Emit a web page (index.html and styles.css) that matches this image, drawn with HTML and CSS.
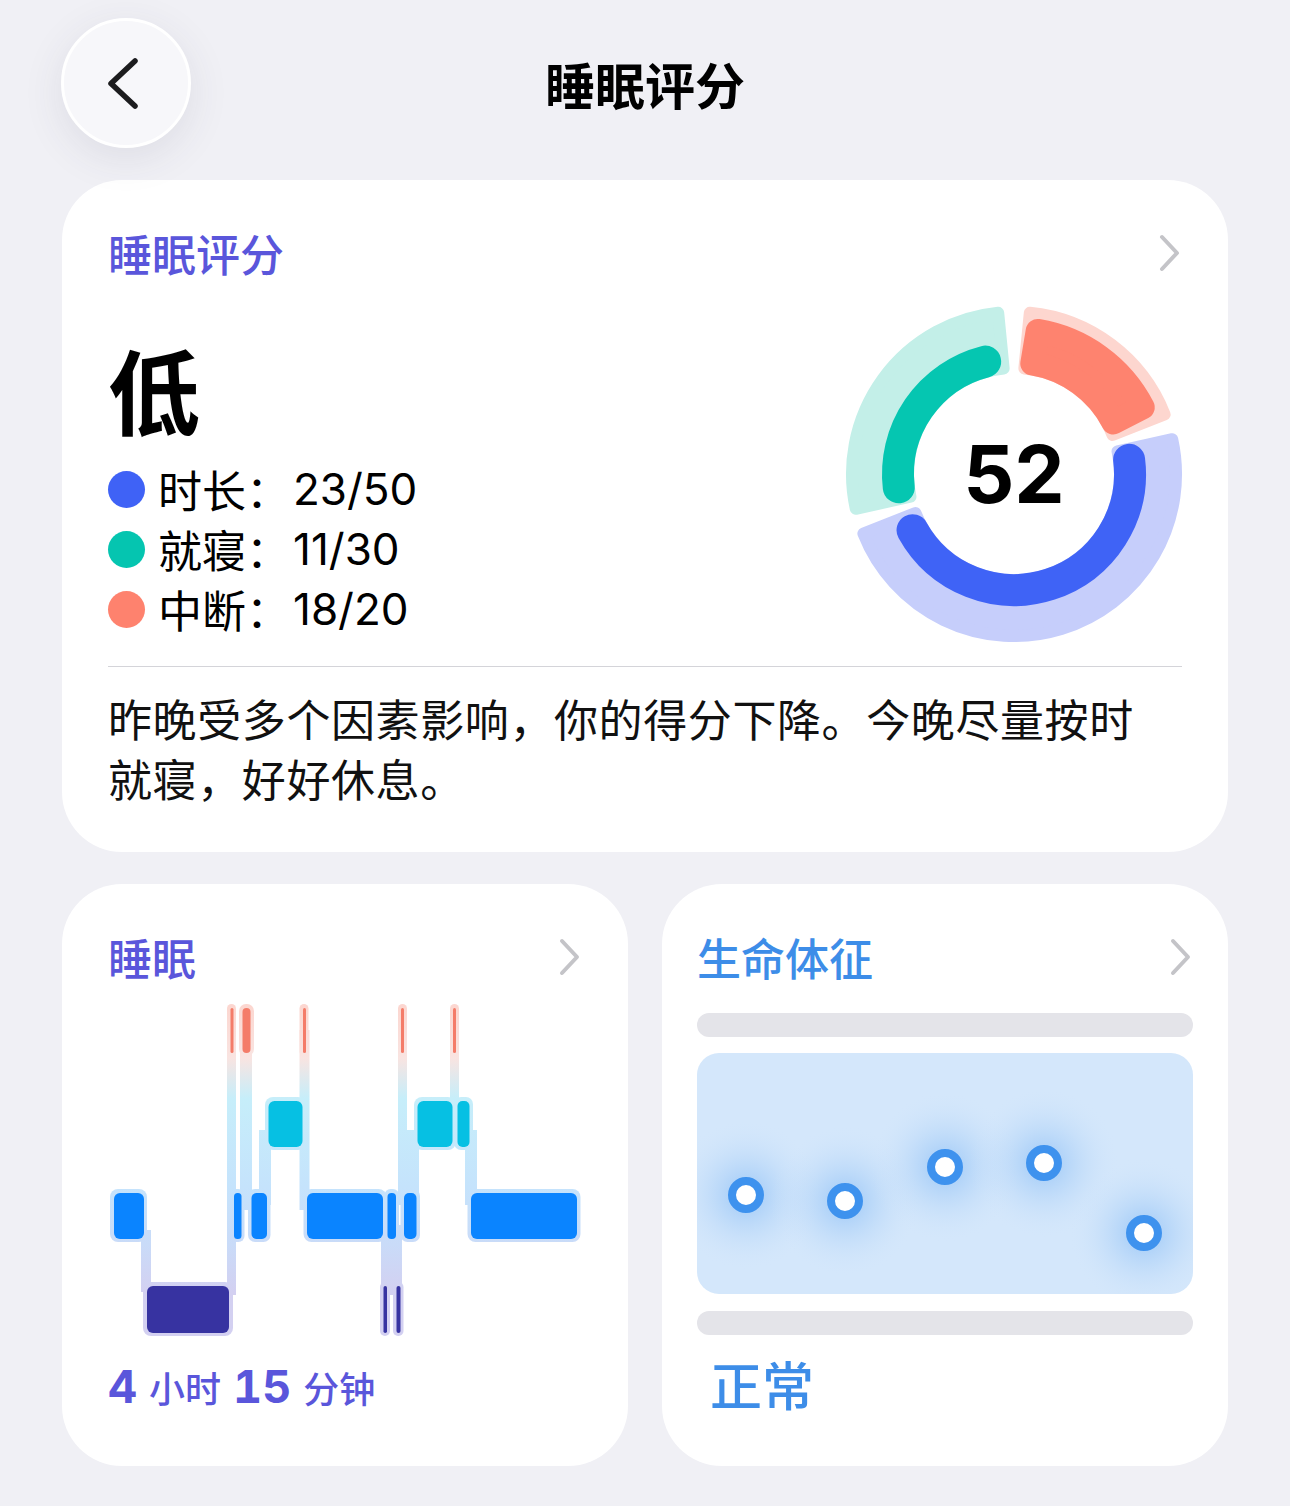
FILE: index.html
```html
<!DOCTYPE html>
<html lang="zh-CN">
<head>
  <meta charset="UTF-8" />
  <meta name="viewport" content="width=device-width, initial-scale=1.0"/>
  <title>睡眠评分</title>
  <link rel="stylesheet" href="styles.css">
</head>
<body>

  <header class="top-bar">
    <div class="back-btn">
      <svg width="40" height="60" viewBox="0 0 40 60">
        <path d="M29 8 L5 30.5 L29 53" fill="none" stroke="#1c1c1e" stroke-width="5.5" stroke-linecap="round" stroke-linejoin="round"/>
      </svg>
    </div>
    <h1 class="page-title">睡眠评分</h1>
    <div></div>
  </header>

  <main class="content">

    <section class="card score-card">
      <div class="card-head">
        <h2 class="card-title indigo">睡眠评分</h2>
        <svg class="chevron" width="24" height="40" viewBox="0 0 24 40"><path d="M4 4 L19 20 L4 36"/></svg>
      </div>

      <div class="summary">
        <div class="summary-left">
          <div class="grade">低</div>
          <ul class="legend">
            <li><span class="dot dot-blue"></span>时长：<span class="num">23/50</span></li>
            <li><span class="dot dot-teal"></span>就寝：<span class="num">11/30</span></li>
            <li><span class="dot dot-coral"></span>中断：<span class="num">18/20</span></li>
          </ul>
        </div>

        <svg class="ring" width="340" height="340" viewBox="-170 -170 340 340">
          <g stroke-width="12" stroke-linejoin="round">
            <path fill="#fdd6cf" stroke="#fdd6cf" d="M15.81 -161.22 A162 162 0 0 1 150.63 -59.63 L98.56 -39.02 A106 106 0 0 0 10.35 -105.49 Z"/>
            <path fill="#c6cefb" stroke="#c6cefb" d="M158.23 -34.78 A162 162 0 0 1 -150.63 59.63 L-98.56 39.02 A106 106 0 0 0 103.53 -22.76 Z"/>
            <path fill="#c3efe8" stroke="#c3efe8" d="M-158.23 34.78 A162 162 0 0 1 -15.81 -161.22 L-10.35 -105.49 A106 106 0 0 0 -103.53 22.76 Z"/>
          </g>
          <path fill="#fe836f" stroke="#fe836f" stroke-width="24" stroke-linejoin="round" d="M23.68 -143.06 A145 145 0 0 1 128.73 -66.73 L99.43 -51.54 A112 112 0 0 0 18.29 -110.50 Z"/>
          <path fill="none" stroke="#3f63f6" stroke-width="32" stroke-linecap="round" d="M115.13 -14.14 A116 116 0 0 1 -101.45 56.24"/>
          <path fill="none" stroke="#05c6b1" stroke-width="32" stroke-linecap="round" d="M-115.23 13.33 A116 116 0 0 1 -28.85 -112.36"/>
          <text class="score" x="0" y="29" text-anchor="middle">52</text>
        </svg>
      </div>

      <hr class="divider">

      <p class="advice">昨晚受多个因素影响，你的得分下降。今晚尽量按时<br>就寝，好好休息。</p>
    </section>

    <div class="card-row">

      <section class="card small-card sleep-card">
        <div class="card-head">
          <h2 class="card-title indigo">睡眠</h2>
          <svg class="chevron" width="24" height="40" viewBox="0 0 24 40"><path d="M4 4 L19 20 L4 36"/></svg>
        </div>

        <svg class="stages" width="474" height="340" viewBox="3 0 474 340">
          <defs>
            <linearGradient id="halo" gradientUnits="userSpaceOnUse" x1="0" y1="0" x2="0" y2="340">
              <stop offset="0" stop-color="#fcd5ce"/>
              <stop offset="0.17" stop-color="#f9e4e1"/>
              <stop offset="0.29" stop-color="#c6eefa"/>
              <stop offset="0.55" stop-color="#c5e3fc"/>
              <stop offset="0.72" stop-color="#c9dbf8"/>
              <stop offset="0.86" stop-color="#d3d0f1"/>
              <stop offset="1" stop-color="#d3d0f1"/>
            </linearGradient>
          </defs>

          <!-- halo -->
          <g fill="url(#halo)">
            <rect x="5" y="189" width="37" height="53" rx="8"/>
            <rect x="38" y="282" width="90" height="54" rx="8"/>
            <rect x="122" y="4" width="9" height="52" rx="4.5"/>
            <rect x="125.5" y="189" width="14" height="53" rx="6"/>
            <rect x="134" y="4" width="15" height="52" rx="7"/>
            <rect x="143" y="189" width="22.5" height="53" rx="7"/>
            <rect x="160" y="97" width="41" height="53" rx="8"/>
            <rect x="194.5" y="4" width="9" height="52" rx="4.5"/>
            <rect x="198.5" y="189" width="83" height="53" rx="8"/>
            <rect x="275" y="282" width="10" height="54" rx="5"/>
            <rect x="279.5" y="189" width="14.5" height="53" rx="6"/>
            <rect x="288" y="282" width="10.5" height="54" rx="5"/>
            <rect x="293" y="4" width="9" height="52" rx="4.5"/>
            <rect x="295.5" y="189" width="19.5" height="53" rx="7"/>
            <rect x="309" y="97" width="42" height="53" rx="8"/>
            <rect x="345" y="4" width="9" height="52" rx="4.5"/>
            <rect x="349" y="97" width="19" height="53" rx="7"/>
            <rect x="362.5" y="189" width="113" height="53" rx="8"/>

            <rect x="36" y="230" width="10" height="62"/>
            <rect x="122" y="30" width="9" height="265"/>
            <rect x="135" y="30" width="12" height="180"/>
            <rect x="154" y="130" width="12" height="75"/>
            <rect x="194.5" y="30" width="10" height="180"/>
            <rect x="276" y="225" width="21" height="70"/>
            <rect x="293" y="30" width="9" height="175"/>
            <rect x="300" y="130" width="14" height="75"/>
            <rect x="345" y="30" width="9" height="85"/>
            <rect x="360" y="130" width="12" height="75"/>
          </g>

          <!-- awake -->
          <g fill="#f47c69">
            <rect x="125.5" y="8" width="3" height="45" rx="1.5"/>
            <rect x="137.5" y="8" width="8" height="45" rx="4"/>
            <rect x="198" y="8" width="3" height="45" rx="1.5"/>
            <rect x="296" y="8" width="3" height="45" rx="1.5"/>
            <rect x="348" y="8" width="3" height="45" rx="1.5"/>
          </g>
          <!-- rem -->
          <g fill="#06c0e3">
            <rect x="163.5" y="101" width="34" height="46" rx="6"/>
            <rect x="312.5" y="101" width="35" height="46" rx="6"/>
            <rect x="352.5" y="101" width="12" height="46" rx="5"/>
          </g>
          <!-- light -->
          <g fill="#0a84ff">
            <rect x="9" y="193" width="30" height="46" rx="6"/>
            <rect x="129" y="193" width="7.5" height="46" rx="3.5"/>
            <rect x="146.5" y="193" width="15.5" height="46" rx="5"/>
            <rect x="202" y="193" width="76" height="46" rx="6"/>
            <rect x="282.5" y="193" width="8.5" height="46" rx="4"/>
            <rect x="299" y="193" width="12.5" height="46" rx="5"/>
            <rect x="366" y="193" width="106" height="46" rx="6"/>
          </g>
          <!-- deep -->
          <g fill="#3733a1">
            <rect x="42" y="286" width="82" height="47" rx="6"/>
            <rect x="278.5" y="286" width="3.5" height="47" rx="1.75"/>
            <rect x="291.5" y="286" width="4" height="47" rx="2"/>
          </g>
        </svg>

        <div class="duration">
          <span class="big">4</span><span class="unit">小时</span><span class="big">15</span><span class="unit">分钟</span>
        </div>
      </section>

      <section class="card small-card vitals-card">
        <div class="card-head">
          <h2 class="card-title blue">生命体征</h2>
          <svg class="chevron" width="24" height="40" viewBox="0 0 24 40"><path d="M4 4 L19 20 L4 36"/></svg>
        </div>

        <div class="bar bar-top"></div>

        <div class="vitals-plot">
          <svg width="496" height="241" viewBox="0 0 496 241">
            <defs>
              <radialGradient id="glow">
                <stop offset="0" stop-color="#80b8f5" stop-opacity="0.7"/>
                <stop offset="0.45" stop-color="#a6cdf7" stop-opacity="0.4"/>
                <stop offset="1" stop-color="#d3e6fb" stop-opacity="0"/>
              </radialGradient>
            </defs>
            <g fill="url(#glow)">
              <circle cx="49" cy="142" r="75"/>
              <circle cx="148" cy="148" r="75"/>
              <circle cx="248" cy="114" r="75"/>
              <circle cx="347" cy="110" r="75"/>
              <circle cx="447" cy="180" r="75"/>
            </g>
            <g fill="#fff" stroke="#3e92ee" stroke-width="8">
              <circle cx="49" cy="142" r="14"/>
              <circle cx="148" cy="148" r="14"/>
              <circle cx="248" cy="114" r="14"/>
              <circle cx="347" cy="110" r="14"/>
              <circle cx="447" cy="180" r="14"/>
            </g>
          </svg>
        </div>

        <div class="bar bar-bottom"></div>

        <div class="status">正常</div>
      </section>

    </div>
  </main>

</body>
</html>
```

FILE: styles.css
```css
* {
  box-sizing: border-box;
  margin: 0;
  padding: 0;
}

body {
  background: #f0f0f5;
  font-family: "Noto Sans CJK SC", sans-serif;
  color: #000;
  width: 1290px;
  min-height: 1506px;
}

.top-bar {
  display: grid;
  grid-template-columns: 130px 1fr 130px;
  align-items: center;
  padding: 18px 61px 0;
}

.back-btn {
  width: 130px;
  height: 130px;
  border-radius: 50%;
  background: #f7f7fa;
  border: 3px solid #fff;
  box-shadow: 0 10px 40px rgba(60, 60, 90, 0.10);
  display: flex;
  align-items: center;
  justify-content: center;
}

.page-title {
  text-align: center;
  font-size: 50px;
  font-weight: 700;
  line-height: 130px;
}

.content {
  padding: 32px 62px 0;
}

.card {
  background: #fff;
  border-radius: 60px;
}

.card-head {
  display: flex;
  justify-content: space-between;
  align-items: center;
  height: 50px;
}

.card-title {
  font-size: 44px;
  font-weight: 500;
  line-height: 50px;
}

.indigo { color: #5a56db; }
.blue { color: #3d8de8; }

.chevron path {
  fill: none;
  stroke: #c4c4c8;
  stroke-width: 4;
  stroke-linecap: round;
  stroke-linejoin: round;
}

/* score card */

.score-card {
  padding: 48px 46px 44px;
}

.summary {
  display: flex;
  justify-content: space-between;
  align-items: flex-start;
  margin-top: 26px;
}

.summary-left {
  padding-top: 34px;
}

.grade {
  font-size: 92px;
  font-weight: 700;
  line-height: 100px;
}

.legend {
  list-style: none;
  margin-top: 21px;
}

.legend li {
  display: flex;
  align-items: center;
  height: 60px;
  font-size: 44px;
}

.dot {
  width: 37px;
  height: 37px;
  border-radius: 50%;
  margin-right: 13px;
}

.dot-blue { background: #3f62f6; }
.dot-teal { background: #05c5b0; }
.dot-coral { background: #fe826e; }

.num {
  font-family: Inter, "Noto Sans CJK SC", sans-serif;
  font-size: 44px;
  margin-left: 3px;
}

.ring {
  margin-right: -2px;
}

.score {
  font-family: Inter, sans-serif;
  font-size: 80px;
  font-weight: 700;
  fill: #000;
}

.divider {
  border: none;
  border-top: 1px solid #d4d4d9;
  margin-top: 22px;
}

.advice {
  margin-top: 21px;
  font-size: 44px;
  line-height: 60px;
  letter-spacing: 0.6px;
  color: #111;
}

/* small cards */

.card-row {
  display: grid;
  grid-template-columns: 1fr 1fr;
  gap: 34px;
  margin-top: 32px;
}

.small-card {
  height: 582px;
  padding-top: 48px;
}

.sleep-card {
  padding-left: 46px;
  padding-right: 46px;
}

.stages {
  display: block;
  margin-top: 18px;
}

.duration {
  margin-top: 19px;
  line-height: 56px;
  color: #5a56db;
  font-family: Inter, "Noto Sans CJK SC", sans-serif;
}

.duration .big {
  font-size: 45px;
  font-weight: 700;
  font-variant-numeric: tabular-nums;
}

.duration .unit {
  font-family: "Noto Sans CJK SC", sans-serif;
  font-size: 36px;
  font-weight: 500;
  margin: 0 12px;
}

.vitals-card {
  padding-left: 35px;
  padding-right: 35px;
}

.bar {
  height: 24px;
  border-radius: 12px;
  background: #e4e4e9;
}

.bar-top {
  margin-top: 31px;
}

.vitals-plot {
  margin-top: 16px;
  height: 241px;
  border-radius: 22px;
  background: #d4e7fb;
  overflow: hidden;
}

.vitals-plot svg {
  display: block;
}

.bar-bottom {
  margin-top: 17px;
}

.status {
  margin-top: 19px;
  padding-left: 13px;
  font-size: 52px;
  font-weight: 500;
  line-height: 60px;
  color: #3d8de8;
}
```
